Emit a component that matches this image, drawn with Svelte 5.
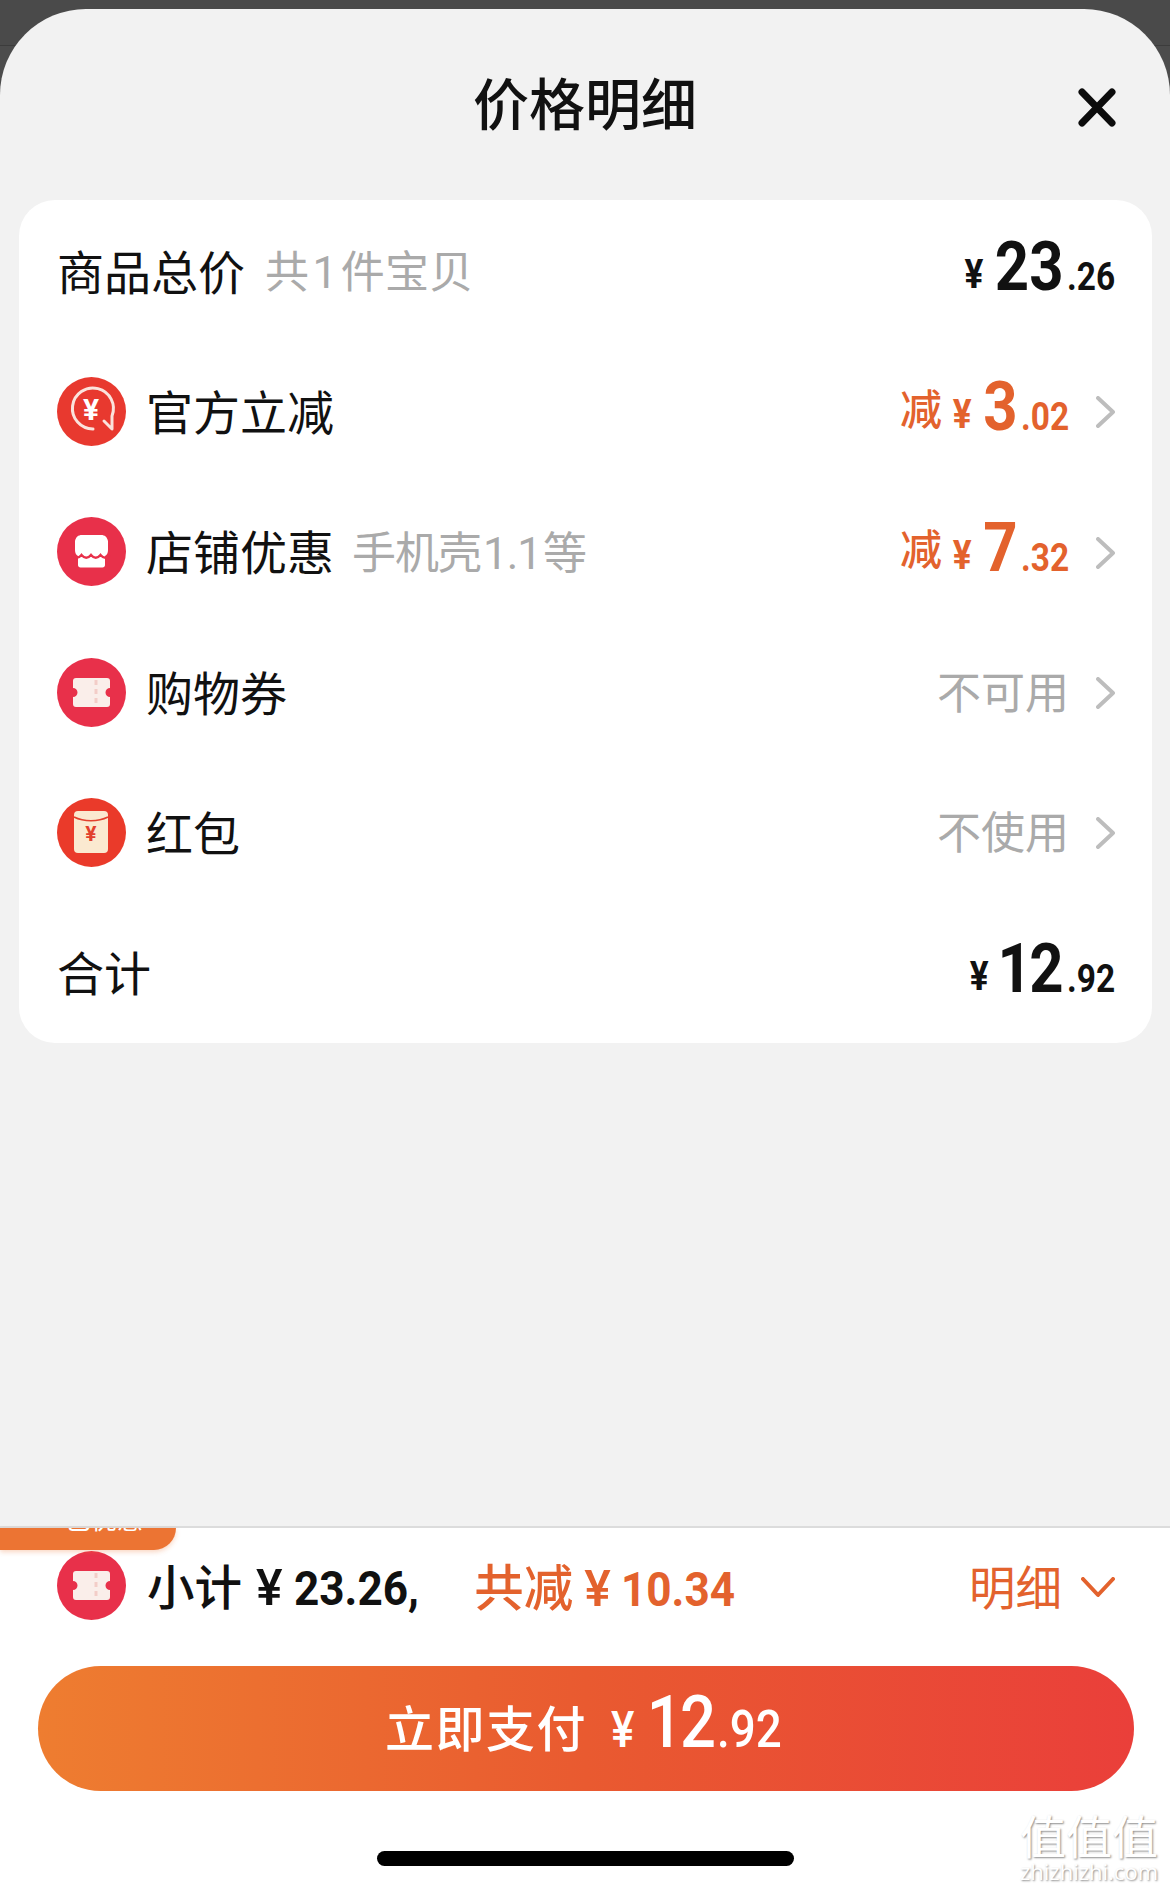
<script>
	// rows between the total and the sum, tone: cut = orange amount, else grey note
	const rows = [
		{ icon: 'cut', label: '官方立减', note: '', whole: '3', cents: '.02' },
		{ icon: 'shop', label: '店铺优惠', note: '手机壳 1.1 等', whole: '7', cents: '.32' },
		{ icon: 'ticket', label: '购物券', state: '不可用' },
		{ icon: 'packet', label: '红包', state: '不使用' }
	];
</script>

{#snippet ticket()}
	<svg class="icon" viewBox="0 0 69 69">
		<circle cx="34.5" cy="34.5" r="34.5" fill="#e8304a" />
		<path d="M19 20h31a3 3 0 0 1 3 3v7a4.500 4.500 0 0 0 0 9v7a3 3 0 0 1-3 3H19a3 3 0 0 1-3-3v-7a4.500 4.500 0 0 0 0-9v-7a3 3 0 0 1 3-3z" fill="#faeeea" />
		<path d="M39 22v26" stroke="#f3cdc8" stroke-width="3" stroke-dasharray="5 4" fill="none" />
	</svg>
{/snippet}

{#snippet rowIcon(kind)}
	{#if kind === 'cut'}
		<svg class="icon" viewBox="0 0 69 69">
			<circle cx="34.5" cy="34.5" r="34.500" fill="#e8392f" />
			<path d="M36 52a20.500 20.500 0 1 1 19-13v13l-8-8" fill="none" stroke="#fbe3dc" stroke-width="3" stroke-linecap="round" stroke-linejoin="round" />
			<text x="34" y="43" class="yen" font-size="30" fill="#fff">¥</text>
		</svg>
	{:else if kind === 'shop'}
		<svg class="icon" viewBox="0 0 69 69">
			<circle cx="34.5" cy="34.5" r="34.5" fill="#e8304a" />
			<path d="M25 18h19c4 0 6 2 7 6v9c0 3-1 5-3 6v9c0 1.500-1 2.500-2.500 2.500h-22c-1.500 0-2.500-1-2.500-2.500v-9c-2-1-3-3-3-6v-9c1-4 3-6 7-6z" fill="#fff" />
			<path d="M15 38c3 3.500 6.500 3.500 9.500 0 3 3.500 6.500 3.500 9.500 0 3 3.500 6.500 3.500 9.500 0 3 3.500 6.500 3.500 9.500 0" fill="none" stroke="#e8304a" stroke-width="2.500" />
		</svg>
	{:else if kind === 'packet'}
		<svg class="icon" viewBox="0 0 69 69">
			<circle cx="34.5" cy="34.5" r="34.5" fill="#ea3a2a" />
			<rect x="17" y="13" width="34" height="42" rx="4" fill="#fbe9d0" />
			<path d="M17 19c10 5 24 5 34 0" fill="none" stroke="#e2402e" stroke-width="1.500" />
			<text x="34" y="43" class="yen" font-size="21" fill="#e2402e">¥</text>
		</svg>
	{:else}
		{@render ticket()}
	{/if}
{/snippet}

{#snippet chevron()}
	<svg class="chev" viewBox="0 0 19 32">
		<path d="M2 2l15 14L2 30" fill="none" stroke="#bdbdbd" stroke-width="4" stroke-linecap="round" stroke-linejoin="round" />
	</svg>
{/snippet}

<div class="screen">
	<div class="sheet">
		<header class="head">
			<h1>价格明细</h1>
			<svg class="close" viewBox="0 0 38 39">
				<path d="M4 4l30 31M34 4L4 35" stroke="#0c0c0c" stroke-width="7" stroke-linecap="round" />
			</svg>
		</header>

		<section class="card">
			<div class="row">
				<span class="label">商品总价</span>
				<span class="note first">共 1 件宝贝</span>
				<span class="money dark">
					<span class="cur">¥</span><span class="big">23</span><span class="cents">.26</span>
				</span>
			</div>

			{#each rows as r}
				<div class="row">
					{@render rowIcon(r.icon)}
					<span class="label">{r.label}</span>
					{#if r.note}<span class="note tight">{r.note}</span>{/if}
					{#if r.state}
						<span class="status">{r.state}</span>
					{:else}
						<span class="minus">减</span>
						<span class="money cut">
							<span class="cur">¥</span><span class="big">{r.whole}</span><span class="cents">{r.cents}</span>
						</span>
					{/if}
					{@render chevron()}
				</div>
			{/each}

			<div class="row">
				<span class="label">合计</span>
				<span class="money dark">
					<span class="cur">¥</span><span class="big ones">12</span><span class="cents">.92</span>
				</span>
			</div>
		</section>
	</div>

	<footer class="foot">
		<div class="tab"><span>已优惠</span></div>
		<div class="sum">
			{@render ticket()}
			<span class="sub">小计<i>¥</i><b>23.26,</b></span>
			<span class="off">共减<i>¥</i><b>10.34</b></span>
			<span class="detail">明细</span>
			<svg class="down" viewBox="0 0 34 21">
				<path d="M2 2l15 16L32 2" fill="none" stroke="#e3622d" stroke-width="4" stroke-linecap="round" stroke-linejoin="round" />
			</svg>
		</div>
		<button class="pay">
			<span class="pay-label">立即支付</span>
			<span class="pay-num"><span class="cur">¥</span><span class="big">12</span><span class="cents">.92</span></span>
		</button>
		<div class="home"></div>
		<div class="mark">
			<span class="mark-cn">值值值</span>
			<span class="mark-en">zhizhizhi.com</span>
		</div>
	</footer>
</div>

<style>
	:global(body) {
		margin: 0;
		background: #fff;
	}
	.screen {
		position: relative;
		width: 1170px;
		height: 1890px;
		display: flex;
		flex-direction: column;
		background: linear-gradient(#4a4a4a 45px, #3c3c3c 45px, #3c3c3c 46px, #4c4c4c 46px);
		font-family: Roboto, "Noto Sans CJK SC", sans-serif;
		color: #111;
		overflow: hidden;
	}
	.sheet {
		flex: 1;
		margin-top: 9px;
		background: #f2f2f2;
		border-radius: 86px 86px 0 0;
		padding: 0 18px 0 19px;
	}
	.head {
		position: relative;
		height: 191px;
		display: flex;
		justify-content: center;
		padding-top: 54px;
		box-sizing: border-box;
	}
	h1 {
		margin: 0;
		font-size: 56px;
		line-height: 76px;
		font-weight: 500;
		font-family: "Noto Sans CJK SC", sans-serif;
		padding-right: 1px;
	}
	.close {
		position: absolute;
		top: 79px;
		right: 36px;
		width: 38px;
		height: 39px;
	}
	.card {
		height: 843px;
		background: #fff;
		border-radius: 36px;
		display: grid;
		grid-auto-rows: 1fr;
		padding: 1px 37px 0 38px;
		box-sizing: border-box;
	}
	.row {
		display: flex;
		align-items: center;
	}
	.icon {
		width: 69px;
		height: 69px;
		flex: none;
		margin-right: 20px;
	}
	.yen {
		font-family: Roboto, sans-serif;
		font-weight: 700;
		text-anchor: middle;
	}
	.label {
		font-family: "Noto Sans CJK SC", sans-serif;
		font-size: 47px;
		font-weight: 400;
		padding-bottom: 4px;
	}
	.note {
		font-size: 44px;
		color: #aaa;
		margin-left: 18px;
		word-spacing: -8px;
		letter-spacing: 0.3px;
		font-weight: 400;
		padding-bottom: 4px;
	}
	.note.first {
		margin-left: 20px;
	}
	.note.tight {
		letter-spacing: -1px;
	}
	.status {
		margin-left: auto;
		font-size: 44px;
		color: #aaa;
		font-family: "Noto Sans CJK SC", sans-serif;
		font-weight: 400;
		margin-right: 27px;
		padding-bottom: 4px;
	}
	/* the amounts are a condensed DIN in the app, squeeze Roboto to get close */
	.money {
		white-space: nowrap;
		line-height: 70px;
		margin-top: 10px;
		transform: scaleX(0.88);
		transform-origin: right center;
	}
	.dark {
		margin-left: auto;
	}
	.money .big {
		font-size: 68px;
		font-weight: 700;
		margin-left: 13px;
	}
	.money .big.ones {
		letter-spacing: -3px;
		margin-left: 10px;
		margin-right: 3px;
	}
	.money .cur {
		font-size: 40px;
		font-weight: 700;
		vertical-align: 2px;
	}
	.money .cents {
		font-size: 38px;
		font-weight: 700;
		margin-left: 4px;
	}
	.cut {
		color: #e3622d;
		margin-right: 27px;
	}
	.minus {
		margin-left: auto;
		margin-right: -5px;
		color: #e3622d;
		font-family: "Noto Sans CJK SC", sans-serif;
		font-size: 42px;
		font-weight: 500;
		padding-bottom: 10px;
	}
	.chev {
		width: 19px;
		height: 32px;
		flex: none;
		margin-top: 2px;
	}
	.foot {
		position: relative;
		height: 364px;
		background: #fff;
		border-top: 2px solid #dcdcdc;
		box-sizing: border-box;
		padding: 0 38px;
	}
	.tab {
		position: absolute;
		top: 0;
		left: 0;
		width: 176px;
		height: 22px;
		background: #ec7433;
		border-radius: 0 0 40px 0;
		box-shadow: 0 2px 5px rgba(236, 116, 51, 0.3);
		overflow: hidden;
		color: #fff;
		font-size: 26px;
		text-align: center;
	}
	.tab span {
		display: block;
		margin-top: -29px;
		line-height: 38px;
		font-family: "Noto Sans CJK SC", sans-serif;
		padding-left: 32px;
	}
	.sum {
		height: 138px;
		padding: 23px 17px 46px 19px;
		box-sizing: border-box;
		display: flex;
		align-items: center;
		font-size: 47.500px;
	}
	.sum .icon {
		margin-right: 21px;
	}
	.sub,
	.off,
	.detail {
		font-family: "Noto Sans CJK SC", sans-serif;
		white-space: nowrap;
		padding-bottom: 2px;
	}
	.sub i,
	.off i {
		font-family: Roboto, sans-serif;
		font-style: normal;
		font-weight: 500;
		font-size: 50px;
		margin: 0 11px 0 14px;
	}
	.off i {
		margin: 0 10px 0 11px;
	}
	.sub b,
	.off b {
		display: inline-block;
		font-family: Roboto, sans-serif;
		font-weight: 700;
		font-size: 49px;
		transform: scaleX(0.9);
		transform-origin: left center;
	}
	.sub b {
		margin-right: -14px;
	}
	.off b {
		margin-right: -12px;
	}
	.sub {
		color: #111;
		font-weight: 500;
	}
	.off {
		color: #e3622d;
		font-weight: 500;
		font-size: 49.500px;
		margin-left: 56px;
	}
	.detail {
		margin-left: auto;
		color: #e3622d;
		font-size: 46.500px;
		margin-right: 19px;
	}
	.down {
		width: 34px;
		height: 21px;
		margin-top: 4px;
	}
	.pay {
		width: 1096px;
		height: 125px;
		border: 0;
		border-radius: 63px;
		background: linear-gradient(90deg, #ee7d30, #e95a30 50%, #ea3f3a);
		color: #fff;
		display: flex;
		align-items: baseline;
		justify-content: center;
		padding: 21px 0 0;
		font-family: Roboto, "Noto Sans CJK SC", sans-serif;
		box-sizing: border-box;
	}
	.pay-label {
		font-family: "Noto Sans CJK SC", sans-serif;
		font-size: 49px;
		font-weight: 500;
		letter-spacing: 1.500px;
		margin-right: 24px;
	}
	.pay-num {
		display: inline-block;
		white-space: nowrap;
		transform: scaleX(0.88);
		transform-origin: left center;
		margin-right: -18px;
	}
	.pay .cur {
		font-size: 50px;
		font-weight: 500;
	}
	.pay .big {
		font-size: 72px;
		font-weight: 500;
		letter-spacing: -3px;
		margin-left: 14px;
		line-height: 1;
	}
	.pay .cents {
		font-size: 52px;
		font-weight: 500;
		margin-left: 4px;
	}
	.home {
		width: 417px;
		height: 15px;
		margin: 60px auto 0;
		background: #000;
		border-radius: 8px;
	}
	.mark {
		position: absolute;
		right: 8px;
		bottom: 7px;
		width: 146px;
		display: flex;
		flex-direction: column;
		align-items: center;
		color: #fff;
		text-shadow: 1px 1px 2px rgba(0, 0, 0, 0.45);
	}
	.mark-cn {
		font-family: "Noto Sans CJK SC", sans-serif;
		font-size: 46px;
		line-height: 50px;
		white-space: nowrap;
	}
	.mark-en {
		font-family: "Open Sans", sans-serif;
		font-size: 22px;
		line-height: 24px;
	}
</style>
